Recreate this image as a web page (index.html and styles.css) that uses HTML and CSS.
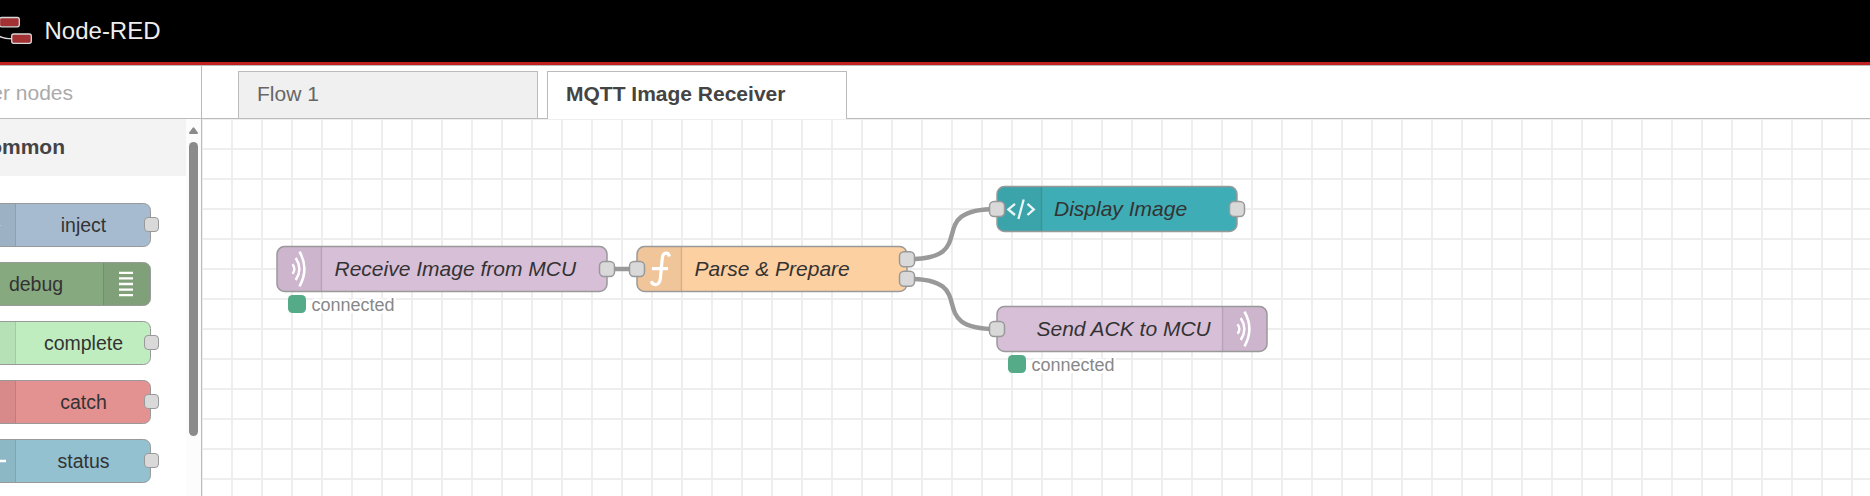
FILE: index.html
```html
<!DOCTYPE html>
<html lang="en">
<head>
<meta charset="utf-8">
<title>Node-RED</title>
<link rel="stylesheet" href="styles.css">
</head>
<body>
<div class="app">
  <header class="header">
    <svg class="logo" width="33" height="62" viewBox="0 0 33 62">
      <path d="M-6 31Q-2 38.8 12 38.8" fill="none" stroke="#d9d9d9" stroke-width="1.6"/>
      <rect x="-.5" y="17.5" width="19.8" height="9.3" rx="2" fill="#a13133" stroke="#d9d9d9" stroke-width="1.3"/>
      <rect x="11.7" y="34" width="19.6" height="9.3" rx="2" fill="#a13133" stroke="#d9d9d9" stroke-width="1.3"/>
    </svg>
    <span class="title">Node-RED</span>
  </header>
  <main class="main">
    <aside class="palette">
      <div class="search"><span>filter nodes</span></div>
      <div class="palette-body">
        <div class="list">
          <div class="category"><span>common</span></div>
          <div class="nodes">
            <div class="node inject"><span class="icon"><svg width="9" height="9" viewBox="0 0 9 9"><path d="M0 0 L9 4.5 L0 9Z" fill="#fff" opacity=".6"/></svg></span><span class="label">inject</span><i class="port"></i></div>
            <div class="node debug"><span class="label">debug</span><span class="icon"><svg width="46" height="42" viewBox="0 0 46 42"><path d="M15 9.8h14M15 15.4h14M15 21h14M15 26.6h14M15 32.2h14" stroke="#fff" stroke-width="2.3"/></svg></span></div>
            <div class="node complete"><span class="icon"></span><span class="label">complete</span><i class="port"></i></div>
            <div class="node catch"><span class="icon"></span><span class="label">catch</span><i class="port"></i></div>
            <div class="node status"><span class="icon"><svg width="12" height="6" viewBox="0 0 12 6"><path d="M0 6L5 3H12" fill="none" stroke="#fff" stroke-width="2.6"/></svg></span><span class="label">status</span><i class="port"></i></div>
          </div>
        </div>
        <div class="scrollbar">
          <svg width="9" height="7" viewBox="0 0 9 7"><path d="M3.7 .7Q4.5 -.2 5.3 .7L8.8 5.6Q9.2 7 8.2 7H.8Q-.2 7 .2 5.6Z" fill="#8b8b8b"/></svg>
          <div class="thumb"></div>
        </div>
      </div>
    </aside>
    <section class="workspace">
      <nav class="tabs">
        <div class="tab">Flow 1</div>
        <div class="tab active">MQTT Image Receiver</div>
      </nav>
      <svg class="canvas" width="1668" height="377" viewBox="202 119 1668 377">
        <defs>
          <pattern id="grid" x="201" y="118" width="30" height="30" patternUnits="userSpaceOnUse">
            <path d="M0 0H30V2H2V30H0Z" fill="#eee"/>
          </pattern>
          <rect id="port" x="-7.5" y="-7.5" width="15" height="15" rx="4.5" class="flow-port"/>
          <g id="waves" fill="none" stroke="#fff">
            <path d="M0 -4.8 Q3.8 0 0 4.8" stroke-width="2.4"/>
            <path d="M3.2 -11 Q10.6 0 3.2 11" stroke-width="2.5"/>
            <path d="M7 -17.3 Q16.8 0 7 17.3" stroke-width="2.6"/>
          </g>
        </defs>
        <rect x="202" y="119" width="1668" height="377" fill="url(#grid)"/>
        <g class="wires">
          <path d="M607 269H637"/>
          <path d="M907 259.25C984 259.25 920 209 997 209"/>
          <path d="M907 278.75C984 278.75 920 329 997 329"/>
        </g>

        <rect class="box" x="277" y="246.5" width="330" height="45" rx="7.5" fill="#d8bfd8"/>
        <path class="shade" d="M284.5 247.2H322V290.8H284.5Q277.7 290.8 277.7 284V254Q277.7 247.2 284.5 247.2Z"/>
        <path class="divider" d="M321.5 247.2V290.8"/>
        <use href="#waves" x="292.5" y="269"/>
        <text class="name" x="334.5" y="276">Receive Image from MCU</text>
        <use href="#port" x="607" y="269"/>
        <rect x="288" y="295" width="18" height="18" rx="4.5" fill="#5a8"/>
        <text class="state" x="311.5" y="311">connected</text>

        <rect class="box" x="637" y="246.5" width="270" height="45" rx="7.5" fill="#fdd0a2"/>
        <path class="shade" d="M644.5 247.2H682V290.8H644.5Q637.7 290.8 637.7 284V254Q637.7 247.2 644.5 247.2Z"/>
        <path class="divider" d="M681.5 247.2V290.8"/>
        <path d="M669.3 256.5Q668.8 253 665.8 253.2Q662.7 253.5 662.2 259L660.3 279Q659.5 284.3 655.8 284.6Q652.2 284.8 651.4 281.2M652 268.6H668" fill="none" stroke="#fff" stroke-width="3.2"/>
        <text class="name" x="694.5" y="276">Parse &amp; Prepare</text>
        <use href="#port" x="637" y="269"/>
        <use href="#port" x="907" y="259.25"/>
        <use href="#port" x="907" y="278.75"/>

        <rect class="box" x="997" y="186.5" width="240" height="45" rx="7.5" fill="#3fadb5"/>
        <path class="shade" d="M1004.5 187.2H1042V230.8H1004.5Q997.7 230.8 997.7 224V194Q997.7 187.2 1004.5 187.2Z"/>
        <path class="divider" d="M1041.5 187.2V230.8"/>
        <path d="M1015 203.8L1008.3 209.4L1015 215M1027.5 203.8L1033.8 209.4L1027.5 215M1023.7 199.5L1018.4 219" fill="none" stroke="#fff" stroke-width="2.3" opacity=".9"/>
        <text class="name" x="1054" y="216">Display Image</text>
        <use href="#port" x="997" y="209"/>
        <use href="#port" x="1237" y="209"/>

        <rect class="box" x="997" y="306.5" width="270" height="45" rx="7.5" fill="#d8bfd8"/>
        <path class="shade" d="M1222 307.2H1259.5Q1266.3 307.2 1266.3 314V344Q1266.3 350.8 1259.5 350.8H1222Z"/>
        <path class="divider" d="M1222.5 307.2V350.8"/>
        <use href="#waves" x="1237.5" y="329"/>
        <text class="name" x="1036.5" y="336">Send ACK to MCU</text>
        <use href="#port" x="997" y="329"/>
        <rect x="1008" y="355" width="18" height="18" rx="4.5" fill="#5a8"/>
        <text class="state" x="1031.5" y="371">connected</text>
      </svg>
    </section>
  </main>
</div>
</body>
</html>
```

FILE: styles.css
```css
* { box-sizing: border-box; }
body { margin: 0; background: #fff; font-family: "Liberation Sans", Arial, sans-serif; font-size: 21px; color: #333; }
.app { width: 1870px; height: 496px; overflow: hidden; display: flex; flex-direction: column; }
.header { flex: 0 0 65px; display: flex; align-items: center; background: #000; border-bottom: 3px solid #c02020; }
.logo { flex: none; }
.title { color: #eee; font-size: 24px; line-height: 30px; padding-left: 11.5px; }
.main { flex: 1; min-height: 0; display: flex; border-top: 1px solid #bbb; }

.palette { flex: 0 0 202px; display: flex; flex-direction: column; overflow: hidden; border-right: 1px solid #bbb; }
.search { flex: 0 0 53px; display: flex; align-items: center; justify-content: flex-end; padding: 2px 128px 0 0; border-bottom: 1px solid #bbb; color: #aaa; white-space: nowrap; }
.palette-body { flex: 1; min-height: 0; display: flex; }
.list { flex: 0 0 186px; overflow: hidden; }
.category { height: 57px; display: flex; align-items: center; justify-content: flex-end; padding: 0 121px 1px 0; background: #f3f3f3; font-weight: bold; color: #444; white-space: nowrap; }
.nodes { display: flex; flex-direction: column; gap: 15px; padding-top: 27px; }
.node { position: relative; display: flex; width: 184px; height: 44px; margin-left: -33px; border: 1px solid #999; border-radius: 7.5px; font-size: 19.5px; }
.node .icon { flex: 0 0 48px; display: flex; align-items: center; justify-content: flex-end; background: rgba(0,0,0,.05); border-right: 1px solid rgba(0,0,0,.1); border-radius: 6px 0 0 6px; }
.node .label { flex: 1; display: flex; align-items: center; justify-content: center; padding-left: 1px; }
.node.inject { background: #a6bbcf; }
.node.debug { background: #87a980; }
.node.complete { background: #c0edc0; }
.node.catch { background: #e49191; }
.node.status { background: #94c1d0; }
.node.inject .icon { padding-right: 14px; }
.node.status .icon { padding-right: 9px; }
.node.debug .icon { flex-basis: 47px; border-right: 0; border-left: 1px solid rgba(0,0,0,.1); border-radius: 0 6px 6px 0; }
.port { position: absolute; right: -9px; top: 13px; width: 15px; height: 15px; background: #d9d9d9; border: 1px solid #999; border-radius: 4px; }
.scrollbar { flex: 0 0 15px; display: flex; flex-direction: column; align-items: center; gap: 8px; padding-top: 8px; background: #fcfcfc; }
.thumb { width: 9px; height: 294px; border-radius: 4.5px; background: #8b8b8b; }

.workspace { flex: 1; min-width: 0; display: flex; flex-direction: column; }
.tabs { flex: 0 0 53px; display: flex; gap: 9px; padding: 5px 0 0 36px; border-bottom: 1px solid #bbb; }
.tab { width: 300px; height: 47px; padding: 0 18px; line-height: 44px; background: #f0f0f0; border: 1px solid #bbb; border-bottom: 0; color: #666; white-space: nowrap; }
.tab.active { height: 48px; margin-bottom: -1px; background: #fff; color: #444; font-weight: bold; }
.canvas { display: block; flex: none; }
.wires path { fill: none; stroke: #999; stroke-width: 4.5; }
.box { stroke: #999; stroke-width: 1.5; }
.shade { fill: rgba(0,0,0,.05); }
.divider { stroke: rgba(0,0,0,.1); stroke-width: 1.5; }
.flow-port { fill: #d9d9d9; stroke: #999; stroke-width: 1.5; }
.name { font-size: 21px; font-style: italic; fill: #333; }
.state { font-size: 18px; fill: #888; stroke: #fff; stroke-width: 5px; paint-order: stroke; }
```
